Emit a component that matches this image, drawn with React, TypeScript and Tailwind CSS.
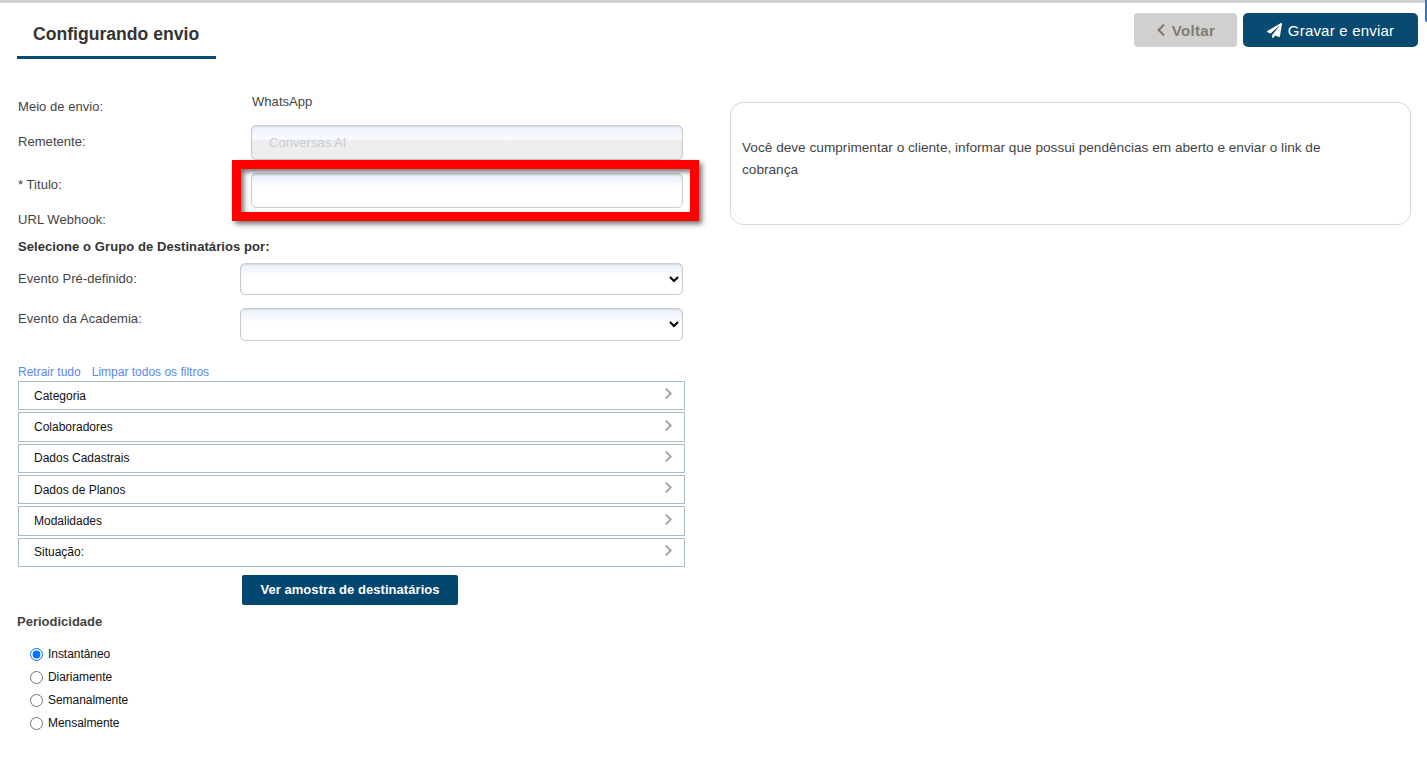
import React from "react";
import { FaPaperPlane, FaChevronLeft, FaChevronRight } from "react-icons/fa";

const gradient = "bg-[linear-gradient(to_bottom,#eaf1fd_0px,#ffffff_14px)]";

function Label({ children, pt }: { children: React.ReactNode; pt: string }) {
  return <div className={`text-[13px] leading-4 text-[#444] tracking-[0.05px] ${pt}`}>{children}</div>;
}

const rows = [
  ["Categoria", "h-[29px]", ""],
  ["Colaboradores", "h-[30px]", ""],
  ["Dados Cadastrais", "h-[29px]", "pb-[1px]"],
  ["Dados de Planos", "h-[29px]", ""],
  ["Modalidades", "h-[30px]", ""],
  ["Situação:", "h-[29px]", "pb-[1px]"],
];

const radios = ["Instantâneo", "Diariamente", "Semanalmente", "Mensalmente"];

export default function App() {
  return (
    <div className="relative h-[784px] w-[1427px] overflow-hidden bg-white font-['Liberation_Sans',Arial,sans-serif]">
      <div className="h-[3px] bg-[#d2d2d2]" />
      <div className="absolute right-0 top-0 h-[22px] w-[2px] rounded-bl bg-[#1a7fe0]" />

      <header className="flex h-[56px] items-start justify-between pl-[17px] pr-[9px]">
        <div className="h-[56px] w-[199px] border-b-[3px] border-[#0a4a70] pl-[16px] pt-[21px] text-[17.6px] font-bold leading-[21px] text-[#333]">
          Configurando envio
        </div>
        <div className="mt-[10px] flex gap-[6px]">
          <button className="flex h-[34px] w-[103px] items-center justify-center gap-[6px] rounded-[4px] bg-[#d2d0ce] pt-[2px] text-[15px] font-bold tracking-[0.35px] text-[#807b77]">
            <FaChevronLeft className="mb-[3px] h-[14px] w-[10px]" />
            Voltar
          </button>
          <button className="flex h-[34px] w-[175px] items-center justify-center gap-[6px] rounded-[5px] bg-[#094a70] pt-[2px] text-[15px] tracking-[0.2px] text-white">
            <FaPaperPlane className="mb-[2px] h-[15px] w-[15px]" />
            Gravar e enviar
          </button>
        </div>
      </header>

      <main className="flex items-start">
        <section className="ml-[18px] w-[667px] pt-[33px]">
          <div className="flex h-[33px]">
            <div className="w-[233px]"><Label pt="pt-[7px]">Meio de envio:</Label></div>
            <div className="pl-[1px] pt-[2px] text-[13px] leading-4 tracking-[0.05px] text-[#444]">WhatsApp</div>
          </div>

          <div className="flex h-[48px]">
            <div className="w-[233px]"><Label pt="pt-[9px]">Remetente:</Label></div>
            <div className="flex h-[35px] w-[432px] items-center rounded-[5px] border border-[#ccc] bg-[linear-gradient(to_bottom,#eaf1fd_0px,#fafcff_13px,#eeeeee_14px)] pl-[17px] text-[13px] text-[#c9cdd1] shadow-[inset_0_1px_2px_rgba(0,0,0,0.1)]">
              Conversas AI
            </div>
          </div>

          <div className="flex h-[38px]">
            <div className="w-[233px]"><Label pt="pt-[4px]">* Titulo:</Label></div>
            <div className="relative">
              <input className={`block h-[35px] w-[432px] rounded-[5px] border border-[#ccc] ${gradient} shadow-[inset_0_1px_2px_rgba(0,0,0,0.1)]`} />
              <div className="pointer-events-none absolute left-[-19px] top-[-13px] h-[61px] w-[467px] border-[9px] border-[#ff0000] shadow-[3px_3px_5px_rgba(0,0,0,0.55),inset_3px_3px_5px_rgba(0,0,0,0.55)]" />
            </div>
          </div>

          <div className="h-[28px]"><Label pt="pt-[1px]">URL Webhook:</Label></div>

          <div className="mb-[8px] text-[13px] font-bold leading-4 tracking-[0.08px] text-[#333]">Selecione o Grupo de Destinatários por:</div>

          <div className="flex h-[45px]">
            <div className="w-[222px]"><Label pt="pt-[8px]">Evento Pré-definido:</Label></div>
            <select className={`h-[32px] w-[443px] rounded-[5px] border border-[#ccc] ${gradient} shadow-[inset_0_1px_2px_rgba(0,0,0,0.1)]`} />
          </div>

          <div className="flex h-[55px]">
            <div className="w-[222px]"><Label pt="pt-[3px]">Evento da Academia:</Label></div>
            <select className={`h-[33px] w-[443px] rounded-[5px] border border-[#ccc] ${gradient} shadow-[inset_0_1px_2px_rgba(0,0,0,0.1)]`} />
          </div>

          <div className="mb-[2px] flex h-[16px] gap-[11px] pt-[2px] text-[12px] leading-[14px] text-[#5b87f0]">
            <a>Retrair tudo</a>
            <a>Limpar todos os filtros</a>
          </div>

          <div className="flex flex-col gap-[2px]">
            {rows.map(([name, h, nudge]) => (
              <div key={name} className={`flex ${h} items-center justify-between border border-[#a9bacb] pl-[15px] pr-[11px] text-[12px] text-[#111] ${nudge}`}>
                <span>{name}</span>
                <FaChevronRight className="mb-[4px] h-[13px] w-[9px] text-[#aaa7a4]" />
              </div>
            ))}
          </div>

          <button className="ml-[224px] mt-[8px] block h-[30px] w-[216px] rounded-[2px] bg-[#034670] text-[13px] font-bold tracking-[0.05px] text-white">
            Ver amostra de destinatários
          </button>

          <div className="ml-[-1px] mt-[9px] text-[13px] font-bold leading-4 text-[#444]">Periodicidade</div>

          <div className="ml-[12px] mt-[12px] flex flex-col">
            {radios.map((r, i) => (
              <label key={r} className="flex h-[23px] items-center gap-[5px] text-[12px] tracking-[-0.05px] text-[#111]">
                <input type="radio" name="periodicidade" defaultChecked={i === 0} className="m-0 mt-[1px] h-[13px] w-[13px]" />
                {r}
              </label>
            ))}
          </div>
        </section>

        <aside className="ml-[45px] mt-[43px] h-[123px] w-[681px] rounded-[13px] border border-[#d8d8d8] pl-[11px] pr-[40px] pt-[34px] text-[13.65px] leading-[22px] text-[#444]">
          Você deve cumprimentar o cliente, informar que possui pendências em aberto e enviar o link de cobrança
        </aside>
      </main>
    </div>
  );
}
